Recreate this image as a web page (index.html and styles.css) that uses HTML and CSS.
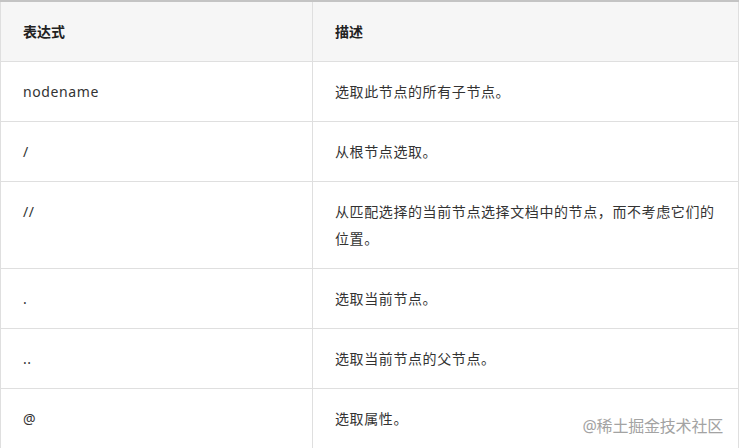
FILE: index.html
```html
<!DOCTYPE html>
<html lang="zh-CN">
<head>
<meta charset="utf-8">
<title>XPath 表达式</title>
<link rel="stylesheet" href="styles.css">
</head>
<body>
<div class="wrap">
  <table class="xp">
    <thead>
      <tr><th class="c1">表达式</th><th class="c2">描述</th></tr>
    </thead>
    <tbody>
      <tr><td>nodename</td><td>选取此节点的所有子节点。</td></tr>
      <tr><td>/</td><td>从根节点选取。</td></tr>
      <tr><td>//</td><td>从匹配选择的当前节点选择文档中的节点，而不考虑它们的位置。</td></tr>
      <tr><td>.</td><td>选取当前节点。</td></tr>
      <tr><td>..</td><td>选取当前节点的父节点。</td></tr>
      <tr><td>@</td><td>选取属性。</td></tr>
    </tbody>
  </table>
  <div class="mark">@稀土掘金技术社区</div>
</div>
</body>
</html>
```
FILE: styles.css
```css
html, body {
  margin: 0;
  padding: 0;
  background: #fff;
  overflow: hidden;
}
body {
  font-family: "Noto Sans", "Noto Sans CJK SC", sans-serif;
  color: #333;
}
.wrap {
  position: relative;
  width: 739px;
  height: 448px;
  overflow: hidden;
}
.xp {
  width: 739px;
  border-collapse: collapse;
  border-top: 2px solid #c4c4c4;
  table-layout: fixed;
}
.xp th, .xp td {
  border: 1px solid #dfdfdf;
  padding: 16px 22px;
  line-height: 27px;
  font-size: 14px;
  text-align: left;
  vertical-align: top;
}
.xp th {
  background: #f6f6f6;
  font-weight: 700;
  color: #222;
}
.xp tr:first-child th { border-top: 0; }
.xp td {
  letter-spacing: 0.6px;
  color: #333;
}
.xp .c1 { width: 267px; }
.mark {
  position: absolute;
  right: 16px;
  bottom: 11px;
  font-size: 16px;
  color: #a3a3a3;
  letter-spacing: -0.2px;
}
```
